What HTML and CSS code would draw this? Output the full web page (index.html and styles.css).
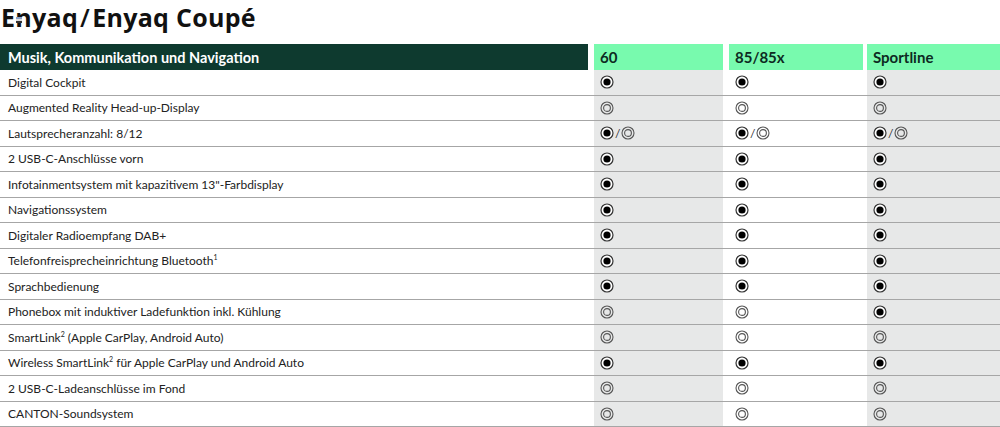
FILE: index.html
```html
<!DOCTYPE html>
<html lang="de">
<head>
<meta charset="utf-8">
<link rel="stylesheet" href="styles.css">
</head>
<body>
<svg width="0" height="0" class="defs">
  <defs>
    <symbol id="full" viewBox="0 0 14 14">
      <circle cx="7" cy="7" r="6" fill="#fff" stroke="#333" stroke-width="1.2"/>
      <circle cx="7" cy="7" r="3.6" fill="#000"/>
    </symbol>
    <symbol id="opt" viewBox="0 0 14 14">
      <circle cx="7" cy="7" r="6" fill="none" stroke="#555" stroke-width="1.1"/>
      <circle cx="7" cy="7" r="3.4" fill="none" stroke="#555" stroke-width="1.1"/>
    </symbol>
  </defs>
</svg>
<h1 class="title">Enyaq<span class="slash">/</span>Enyaq Coupé<span class="artifact"></span></h1>
<div class="table">
  <div class="row head">
    <div class="cell label"><span>Musik, Kommunikation und Navigation</span></div>
    <div class="cell c1"><span>60</span></div>
    <div class="cell c2"><span>85/85x</span></div>
    <div class="cell c3"><span>Sportline</span></div>
  </div>
  <div id="rows"></div>
</div>
<script src="script.js"></script>
</body>
</html>
```
FILE: script.js
```js
var data = [
  ["Digital Cockpit", "f", "f", "f"],
  ["Augmented Reality Head-up-Display", "o", "o", "o"],
  ["Lautsprecheranzahl: 8/12", "fo", "fo", "fo"],
  ["2 USB-C-Anschlüsse vorn", "f", "f", "f"],
  ["Infotainmentsystem mit kapazitivem 13\"-Farbdisplay", "f", "f", "f"],
  ["Navigationssystem", "f", "f", "f"],
  ["Digitaler Radioempfang DAB+", "f", "f", "f"],
  ["Telefonfreisprecheinrichtung Bluetooth<sup>1</sup>", "f", "f", "f"],
  ["Sprachbedienung", "f", "f", "f"],
  ["Phonebox mit induktiver Ladefunktion inkl. Kühlung", "o", "o", "f"],
  ["SmartLink<sup>2</sup> (Apple CarPlay, Android Auto)", "o", "o", "o"],
  ["Wireless SmartLink<sup>2</sup> für Apple CarPlay und Android Auto", "f", "f", "f"],
  ["2 USB-C-Ladeanschlüsse im Fond", "o", "o", "o"],
  ["CANTON-Soundsystem", "o", "o", "o"]
];
function icon(t) {
  var id = t === "f" ? "full" : "opt";
  return '<svg class="ic" width="14" height="14"><use href="#' + id + '"/></svg>';
}
function mark(v) {
  if (v === "fo") return icon("f") + '<span class="sl">/</span>' + icon("o");
  return icon(v);
}
var html = "";
data.forEach(function (r) {
  html += '<div class="row">' +
    '<div class="cell label"><span>' + r[0] + '</span></div>' +
    '<div class="cell c1">' + mark(r[1]) + '</div>' +
    '<div class="cell c2">' + mark(r[2]) + '</div>' +
    '<div class="cell c3">' + mark(r[3]) + '</div>' +
    '</div>';
});
document.getElementById("rows").innerHTML = html;
```
FILE: styles.css
```css
* { box-sizing: border-box; }
html, body { margin: 0; padding: 0; background: #fff; }
body {
  font-family: "Lato", "Noto Sans", sans-serif;
  color: #222;
  width: 1000px;
  overflow: hidden;
}
.defs { position: absolute; }
.title {
  position: relative;
  margin: 0;
  height: 44px;
  padding: 0 0 0 1px;
  font-family: "Open Sans", "Lato", sans-serif;
  font-size: 25px;
  line-height: 34px;
  font-weight: 700;
  color: #111;
  letter-spacing: 0.3px;
}
.slash { margin: 0 2px; font-weight: 600; }
.artifact {
  position: absolute;
  left: 16px;
  top: 17px;
  width: 6px;
  height: 6px;
  background: linear-gradient(#8aa0c8 0 40%, #ddd 40% 60%, #333 60%);
}
.row {
  display: grid;
  grid-template-columns: 594px 135px 138px 133px;
  height: 25.5px;
  border-bottom: 1.5px solid #a6a6a6;
}
.cell {
  display: flex;
  align-items: center;
  font-size: 12px;
  white-space: nowrap;
}
.label { padding-left: 8px; }
.c1, .c2, .c3 { padding-left: 6px; }
.c1 { background: #e7e8e8; margin-right: 6px; }
.c2 { margin-right: 4px; }
.c3 { background: #e7e8e8; }
.head {
  height: 26px;
  border-bottom: none;
}
.head .cell {
  font-size: 14.5px;
  font-weight: 700;
}
.head .label {
  background: #0e3a2f;
  color: #fff;
  margin-right: 6px;
}
.head .c1, .head .c2, .head .c3 {
  background: #78faae;
  color: #0d2a22;
  font-size: 15px;
}
.ic { display: block; }
.sl { font-size: 12px; margin: 0 1px; color: #333; }
sup { font-size: 7px; line-height: 0; vertical-align: 5px; }
```
